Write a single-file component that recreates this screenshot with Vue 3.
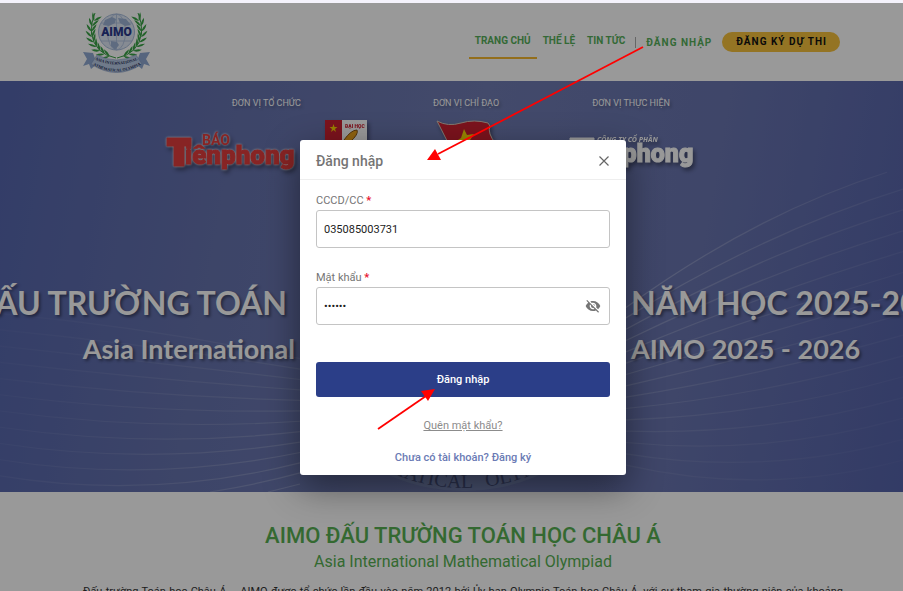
<script setup>
import { ref, computed } from 'vue'

const idNumber = ref('035085003731')
const password = ref('secret')
const showPassword = ref(false)

const nav = [
  { label: 'TRANG CHỦ', active: true },
  { label: 'THỂ LỆ', active: false },
  { label: 'TIN TỨC', active: false },
]

const curve = (x0, y0, xm, ym, x1, y1) =>
  `M${x0} ${y0} Q${2 * xm - (x0 + x1) / 2} ${2 * ym - (y0 + y1) / 2} ${x1} ${y1}`

const leftWaves = computed(() =>
  Array.from({ length: 11 }, (_, i) => {
    const start = 232 + i * 16.2
    const end = 277 + i * 10.4
    const mid = 250 + i * 15.3
    return curve(0, start, 150, mid, 300, end)
  }),
)
const rightWaves = computed(() =>
  Array.from({ length: 15 }, (_, i) => {
    const start = 225 + i * 11.3
    const mid = 143 + i * 18.2
    const end = 87 + i * 20.8
    return i === 0 ? curve(626, 226, 757, 145, 887, 91) : curve(626, start, 765, mid, 903, end)
  }),
)

const leaves = computed(() => {
  const out = []
  for (let i = 0; i < 9; i++) {
    const t = i / 8
    const a = (106 + t * 100) * (Math.PI / 180)
    const x = 33.5 + 25 * Math.cos(a)
    const y = 22 + 25 * Math.sin(a)
    const dir = (a * 180) / Math.PI + 90
    out.push({ x, y, r: dir - 34 }, { x, y, r: dir + 34 })
  }
  return out
})
</script>

<template>
  <div class="page">
    <div class="browser-edge"></div>
    <div class="site">
      <header class="header">
        <a class="brand" href="#" aria-label="AIMO">
          <svg class="brand-logo" viewBox="0 0 68 64">
            <circle cx="33.5" cy="22" r="18" fill="#dfe8f5" stroke="#a9bddd" />
            <g fill="none" stroke="#a9bddd" stroke-width="0.8">
              <ellipse cx="33.5" cy="22" rx="9" ry="18" />
              <path d="M33.5 4v36M18 13h31M18 31h31" />
            </g>
            <path
              d="M22 10l7-3 4 2-1 4-6 3-6-1zM35 8l8 1 5 6-6 1-5-3zM28 31l6 1 2 3-4 5-4-4z"
              fill="#9db3d6"
            />
            <path d="M33 48Q12 44 8.500 24Q8 12 12 3" class="stem" />
            <path d="M34 48Q55 44 58.500 24Q59 12 55 3" class="stem" />
            <g fill="#3aa346">
              <path
                v-for="(l, i) in leaves"
                :key="'a' + i"
                d="M0 0Q4 -2.500 9 0Q4 1.800 0 0z"
                :transform="`translate(${l.x} ${l.y}) rotate(${l.r})`"
              />
              <g transform="translate(67 0) scale(-1 1)">
                <path
                  v-for="(l, i) in leaves"
                  :key="'b' + i"
                  d="M0 0Q4 -2.500 9 0Q4 1.800 0 0z"
                  :transform="`translate(${l.x} ${l.y}) rotate(${l.r})`"
                />
              </g>
            </g>
            <text x="33.500" y="26" class="brand-name">AIMO</text>
            <path
              d="M0 42L10 43L14 54L8 59L6 54L0 56L4 49zM67 42L57 43L53 54L59 59L61 54L67 56L63 49z"
              fill="#8fa9d2"
            />
            <path
              d="M14 45Q33.500 55 53 45L59 54Q33.500 71 8 54z"
              fill="#b9cbe6"
              stroke="#8299c2"
              stroke-width="0.6"
            />
            <path id="ribbon-top" d="M13 50Q33.500 59 54 50" fill="none" />
            <path id="ribbon-bottom" d="M10 55Q33.500 68 57 55" fill="none" />
            <text class="ribbon"><textPath href="#ribbon-top" startOffset="50%">ASIA INTERNATIONAL</textPath></text>
            <text class="ribbon"><textPath href="#ribbon-bottom" startOffset="50%">MATHEMATICAL OLYMPIAD</textPath></text>
          </svg>
        </a>
        <nav class="nav">
          <a
            v-for="item in nav"
            :key="item.label"
            href="#"
            class="nav-link"
            :class="{ active: item.active }"
          >{{ item.label }}</a>
          <span class="divider"></span>
          <a href="#" class="login-link">ĐĂNG NHẬP</a>
          <a href="#" class="register">ĐĂNG KÝ DỰ THI</a>
        </nav>
      </header>

      <section class="hero">
        <svg class="waves" viewBox="0 0 903 410" preserveAspectRatio="none">
          <defs>
            <linearGradient id="fade-left" gradientUnits="userSpaceOnUse" x1="0" y1="0" x2="300" y2="0">
              <stop offset="0" stop-color="#fff" stop-opacity="0.050" />
              <stop offset="1" stop-color="#fff" stop-opacity="0.200" />
            </linearGradient>
            <linearGradient id="fade-right" gradientUnits="userSpaceOnUse" x1="626" y1="0" x2="903" y2="0">
              <stop offset="0" stop-color="#fff" stop-opacity="0.260" />
              <stop offset="1" stop-color="#fff" stop-opacity="0.080" />
            </linearGradient>
          </defs>
          <g fill="none" stroke="url(#fade-left)" stroke-width="1.2">
            <path v-for="(d, i) in leftWaves" :key="d" :d="d" :opacity="0.5 + i * 0.05" />
            <path d="M210 410Q260 402 300 391M268 410L300 402" />
          </g>
          <g fill="none" stroke="url(#fade-right)" stroke-width="1.2">
            <path
              v-for="(d, i) in rightWaves"
              :key="d"
              :d="d"
              :opacity="1 - i * 0.05"
            />
          </g>
        </svg>

        <svg class="emblem" viewBox="35 290 300 80">
          <circle cx="185" cy="185" r="185" fill="#8496bf" opacity="0.5" />
          <path id="emblem-arc" d="M3 185A182 182 0 0 0 367 185" fill="none" />
          <text class="emblem-text" text-anchor="end">
            <textPath href="#emblem-arc" startOffset="295">MATICAL</textPath>
          </text>
          <text class="emblem-text">
            <textPath href="#emblem-arc" startOffset="308">OLYM</textPath>
          </text>
        </svg>

        <div class="sponsors">
          <div class="sponsor">
            <span class="sponsor-label">ĐƠN VỊ TỔ CHỨC</span>
            <div class="sponsor-logos">
              <svg class="paper" viewBox="0 0 132 40">
                <g class="paper-red">
                  <text x="36" y="13" font-size="14" font-weight="700" class="thin">BÁO</text>
                  <path d="M1 6H25V14H18V34H8V14H1z" />
                  <text x="19" y="32" font-size="26" font-weight="900">iênphong</text>
                </g>
              </svg>
              <svg class="school" viewBox="0 0 42 40">
                <path d="M0 0H17V40H0z" fill="#cf2031" />
                <path d="M17 0H42V40H17z" fill="#fff" />
                <path d="M8.500 4l1 3h3l-2.500 2 1 3-2.500-2-2.500 2 1-3-2.500-2h3z" fill="#ffd400" />
                <text x="20" y="8" class="school-name">ĐẠI HỌC</text>
                <path d="M19 20Q26 10 32 10Q34 14 25 22z" fill="#f0a51c" stroke="#8c5710" />
              </svg>
            </div>
          </div>
          <div class="sponsor">
            <span class="sponsor-label">ĐƠN VỊ CHỈ ĐẠO</span>
            <svg class="flag" viewBox="0 0 60 40">
              <path
                d="M1 1Q12 7 25 3Q38 -1 52 3L54 6Q51 13 60 24L60 40H18Q12 20 1 1z"
                fill="#cf2031"
                stroke="#d8c8b8"
              />
              <path d="M28 9l3 6 7-1-4 6 4 6-7-1-4 6-1-7-7-2 6-4z" fill="#ffe000" />
            </svg>
          </div>
          <div class="sponsor">
            <span class="sponsor-label">ĐƠN VỊ THỰC HIỆN</span>
            <svg class="paper" viewBox="0 0 132 40">
              <g class="paper-white">
                <text x="32" y="10" class="company">CÔNG TY CỔ PHẦN</text>
                <path d="M5 6H29V14H21V34H12V14H5z" />
                <text x="23" y="30" font-size="25" font-weight="900">iênphong</text>
              </g>
            </svg>
          </div>
        </div>

        <h1 class="title">
          <span>ĐẤU TRƯỜNG TOÁN</span>
          <span>HỌC CHÂU Á</span>
          <span>NĂM HỌC 2025-2026</span>
        </h1>
        <p class="subtitle">
          <span>Asia International</span>
          <span>Mathematical Olympiad</span>
          <span>AIMO 2025 - 2026</span>
        </p>
      </section>

      <section class="intro">
        <h2>AIMO ĐẤU TRƯỜNG TOÁN HỌC CHÂU Á</h2>
        <h3>Asia International Mathematical Olympiad</h3>
        <p>
          Đấu trường Toán học Châu Á – AIMO được tổ chức lần đầu vào năm 2012 bởi Ủy ban Olympic Toán
          học Châu Á, với sự tham gia thường niên của khoảng
        </p>
      </section>

      <div class="backdrop">
        <div class="modal" role="dialog" aria-labelledby="login-title">
          <div class="modal-head">
            <h4 id="login-title">Đăng nhập</h4>
            <button type="button" class="close" aria-label="Đóng">
              <svg viewBox="0 0 12 12"><path d="M1.500 1.500l9 9M10.500 1.500l-9 9" /></svg>
            </button>
          </div>
          <form class="modal-body" @submit.prevent>
            <label for="cccd">CCCD/CC <b>*</b></label>
            <div class="field">
              <input id="cccd" v-model="idNumber" type="text" />
            </div>
            <label for="password">Mật khẩu <b>*</b></label>
            <div class="field">
              <input id="password" v-model="password" :type="showPassword ? 'text' : 'password'" />
              <button
                type="button"
                class="eye"
                aria-label="Hiện mật khẩu"
                @click="showPassword = !showPassword"
              >
                <svg viewBox="0 0 24 24">
                  <path
                    d="M12 7c2.760 0 5 2.240 5 5 0 .65-.13 1.260-.36 1.830l2.920 2.920c1.510-1.260 2.700-2.890 3.430-4.750-1.730-4.390-6-7.500-11-7.500-1.400 0-2.740.25-3.980.7l2.160 2.160C10.740 7.130 11.350 7 12 7zM2 4.270l2.280 2.280.46.46C3.080 8.300 1.780 10.020 1 12c1.730 4.390 6 7.500 11 7.500 1.550 0 3.030-.3 4.380-.84l.42.42L19.730 22 21 20.730 3.270 3 2 4.270zM7.530 9.800l1.550 1.550c-.05.21-.08.43-.08.65 0 1.660 1.340 3 3 3 .22 0 .44-.03.65-.08l1.550 1.550c-.67.33-1.410.53-2.200.53-2.760 0-5-2.240-5-5 0-.79.2-1.530.53-2.200zm4.310-.78l3.150 3.150.02-.16c0-1.660-1.340-3-3-3l-.17.01z"
                  />
                </svg>
              </button>
            </div>
            <button type="submit" class="submit">Đăng nhập</button>
            <a href="#" class="forgot">Quên mật khẩu?</a>
            <a href="#" class="signup">Chưa có tài khoản? Đăng ký</a>
          </form>
        </div>
      </div>
    </div>

    <svg class="arrows" viewBox="0 0 903 591">
      <g stroke="#f00" stroke-width="1.8" fill="#f00">
        <path d="M643 47L438 154" fill="none" />
        <path d="M427 160L435 149L441 160z" stroke="none" />
        <path d="M378 429L426 396" fill="none" />
        <path d="M435 389L421 391L428 401z" stroke="none" />
      </g>
    </svg>
  </div>
</template>

<style>
body {
  margin: 0;
  background: #fff;
}
</style>

<style scoped>
* {
  box-sizing: border-box;
}
.page {
  --gutter: 23px;
  position: relative;
  display: flex;
  flex-direction: column;
  height: 100vh;
  overflow: hidden;
  font-family: Roboto, 'Noto Sans', sans-serif;
  font-size: 11px;
  color: #333;
}
.browser-edge {
  flex: none;
  height: 3px;
  background: #f4f2fb;
}
.site {
  position: relative;
  flex: 1;
  min-height: 0;
  overflow: hidden;
  background: #fff;
}
a {
  text-decoration: none;
}

.header {
  display: flex;
  align-items: center;
  justify-content: space-between;
  height: 78px;
  padding: 0 63px 0 83px;
}
.brand-logo {
  display: block;
  width: 68px;
  height: 64px;
}
.stem {
  fill: none;
  stroke: #3aa346;
  stroke-width: 1;
}
.brand-name {
  font-size: 12px;
  font-weight: 900;
  text-anchor: middle;
  fill: #2b3a8c;
}
.ribbon {
  font: 700 4px 'Liberation Serif', serif;
  text-anchor: middle;
  fill: #1f2b55;
}
.nav {
  display: flex;
  align-items: center;
  font-size: 10px;
  font-weight: 700;
}
.nav-link {
  height: 34px;
  padding: 8px 6px 0;
  line-height: 16px;
  color: #57b05b;
  border-bottom: 2px solid transparent;
}
.nav-link.active {
  border-color: #f5b82e;
}
.divider {
  width: 1px;
  height: 11px;
  margin: 0 10px 0 4px;
  background: #aaa;
}
.login-link {
  letter-spacing: 1px;
  color: #57b05b;
}
.register {
  margin-left: 10px;
  padding: 0 13px 0 14px;
  line-height: 20px;
  letter-spacing: 1px;
  color: #111;
  background: #f7c13c;
  border-radius: 10px;
}

.hero {
  position: relative;
  height: 411px;
  padding-top: 13px;
  overflow: hidden;
  color: #fff;
  background: linear-gradient(100deg, #5566ae 0%, #6673ae 25%, #707cb2 50%, #6975b0 75%, #5563aa 100%);
}
.waves {
  position: absolute;
  inset: 0;
  width: 100%;
  height: 100%;
}
.emblem {
  position: absolute;
  left: calc(50% + 12px);
  bottom: 1px;
  width: 300px;
  height: 80px;
  transform: translateX(-50%);
}
.emblem-text {
  font: 20px 'Liberation Serif', serif;
  fill: #46507e;
}
.sponsors {
  position: relative;
  display: flex;
  justify-content: center;
  gap: 66px;
  padding-right: 40px;
}
.sponsor {
  display: flex;
  flex-direction: column;
  align-items: center;
  gap: 8px;
}
.sponsor-label {
  font-size: 9px;
  line-height: 18px;
  text-shadow: 2px 2px 3px rgba(0, 0, 0, 0.3);
}
.sponsor-logos {
  display: flex;
  gap: 27px;
}
.sponsor svg {
  display: block;
  overflow: visible;
  filter: drop-shadow(2px 3px 2px rgba(0, 0, 0, 0.4));
}
.paper {
  width: 132px;
  height: 40px;
  margin-top: 12px;
}
.school {
  width: 42px;
  height: 40px;
}
.flag {
  width: 60px;
  height: 40px;
}
.paper-red {
  fill: #e23c3c;
  stroke: #e23c3c;
  stroke-width: 1;
  filter: drop-shadow(0 0 1px #fff);
}
.paper-red .thin {
  stroke: none;
}
.paper-white {
  fill: #fff;
  stroke: #fff;
  stroke-width: 1;
}
.school-name {
  font-size: 5px;
  font-weight: 900;
  fill: #cf2031;
}
.company {
  font: italic 700 7px 'Noto Sans', sans-serif;
  stroke: none;
}
.title,
.subtitle {
  position: absolute;
  right: 0;
  left: var(--gutter);
  display: grid;
  grid-template-columns: 1fr 336px 1fr;
  margin: 0;
  font-family: Lato, sans-serif;
  font-weight: 700;
  white-space: nowrap;
  text-shadow: 2px 2px 3px rgba(0, 0, 0, 0.4);
}
.title {
  top: 200px;
  font-size: 32px;
  line-height: 44px;
}
.subtitle {
  top: 250px;
  font-size: 27px;
  line-height: 36px;
}
.title span,
.subtitle span {
  display: flex;
  justify-content: center;
  min-width: 0;
}
.title span:first-child,
.subtitle span:first-child {
  justify-content: flex-end;
}
.title span:first-child {
  padding-right: 8px;
}
.title span:last-child,
.subtitle span:last-child {
  justify-content: flex-start;
}

.intro {
  padding: 29px 60px 0 83px;
  text-align: center;
}
.intro h2 {
  margin: 0;
  font-size: 22px;
  font-weight: 500;
  line-height: 30px;
  color: #57b052;
}
.intro h3 {
  margin: 0;
  font-size: 16px;
  font-weight: 400;
  line-height: 22px;
  color: #57b052;
}
.intro p {
  margin: 11px 0 0;
  line-height: 16px;
  text-align: justify;
  text-align-last: justify;
}

.backdrop {
  position: absolute;
  inset: 0;
  display: flex;
  align-items: flex-start;
  justify-content: center;
  padding: 137px 0 0 var(--gutter);
  background: rgba(0, 0, 0, 0.4);
}
.modal {
  width: 326px;
  background: #fff;
  border-radius: 3px;
  box-shadow: 0 12px 36px rgba(0, 0, 0, 0.45);
}
.modal-head {
  display: flex;
  align-items: center;
  justify-content: space-between;
  height: 40px;
  padding: 3px 16px 0;
  border-bottom: 1px solid #eee;
}
.modal-head h4 {
  margin: 0;
  font-size: 14px;
  font-weight: 500;
  color: #757575;
}
.close,
.eye {
  display: flex;
  padding: 0;
  background: none;
  border: 0;
}
.close svg {
  width: 12px;
  height: 12px;
  fill: none;
  stroke: #666;
  stroke-width: 1.2;
}
.modal-body {
  display: flex;
  flex-direction: column;
  padding: 12px 16px 9px;
}
.modal-body label {
  line-height: 18px;
  color: #757575;
}
.modal-body label b {
  color: #e8112d;
}
.field {
  display: flex;
  align-items: center;
  height: 38px;
  margin-bottom: 21px;
  padding-right: 8px;
  border: 1px solid #c4c4c4;
  border-radius: 3px;
}
.field input {
  flex: 1;
  min-width: 0;
  height: 100%;
  padding: 0 7px;
  font: 11px Roboto, sans-serif;
  color: #222;
  background: none;
  border: 0;
  outline: 0;
}
.eye svg {
  width: 16px;
  height: 16px;
  fill: #757575;
}
.submit {
  height: 35px;
  margin-top: 16px;
  font: 500 11px Roboto, sans-serif;
  color: #fff;
  background: #2b3e88;
  border: 0;
  border-radius: 3px;
}
.forgot,
.signup {
  align-self: center;
  line-height: 16px;
}
.forgot {
  margin-top: 21px;
  color: #8c8c8c;
  text-decoration: underline;
}
.signup {
  margin-top: 16px;
  font-weight: 500;
  color: #6b7bb5;
}
.arrows {
  position: absolute;
  inset: 0;
  width: 100%;
  height: 100%;
  pointer-events: none;
}
</style>
